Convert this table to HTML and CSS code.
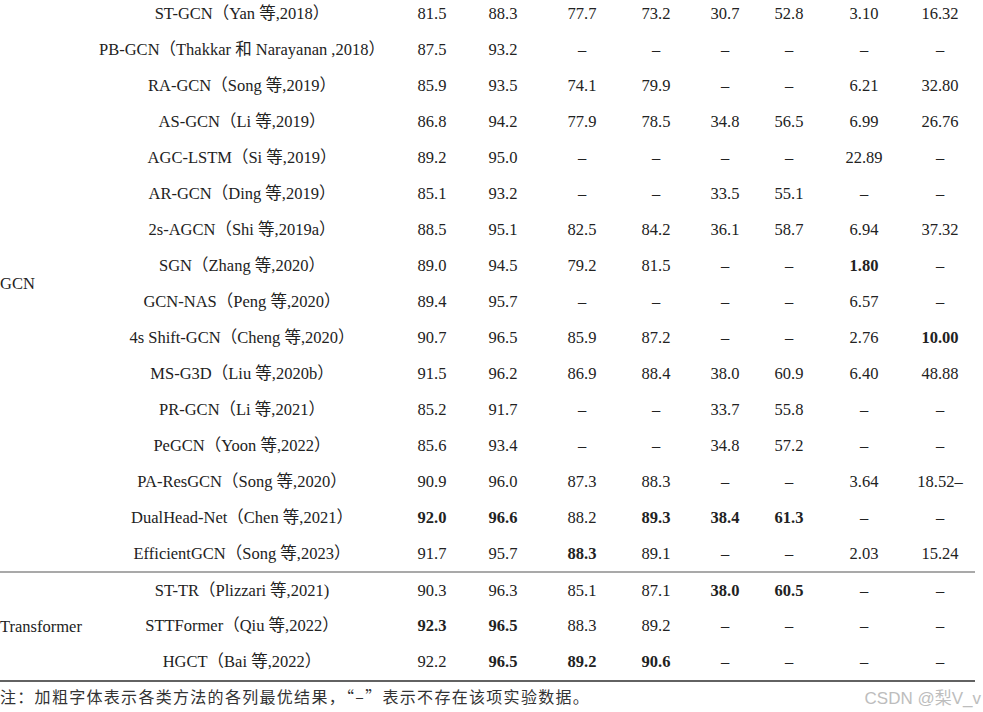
FILE: index.html
```html
<!DOCTYPE html>
<html lang="zh">
<head>
<meta charset="utf-8">
<title>Table</title>
<link rel="stylesheet" href="styles.css">
</head>
<body>
<div class="table">
  <div class="section gcn">
    <div class="group g16">GCN</div>
    <div class="m">ST-GCN（Yan 等,2018）</div><div class="n">81.5</div><div class="n">88.3</div><div class="n">77.7</div><div class="n">73.2</div><div class="n">30.7</div><div class="n">52.8</div><div class="n">3.10</div><div class="n">16.32</div>
    <div class="m">PB-GCN（Thakkar 和 Narayanan ,2018）</div><div class="n">87.5</div><div class="n">93.2</div><div class="n">–</div><div class="n">–</div><div class="n">–</div><div class="n">–</div><div class="n">–</div><div class="n">–</div>
    <div class="m">RA-GCN（Song 等,2019）</div><div class="n">85.9</div><div class="n">93.5</div><div class="n">74.1</div><div class="n">79.9</div><div class="n">–</div><div class="n">–</div><div class="n">6.21</div><div class="n">32.80</div>
    <div class="m">AS-GCN（Li 等,2019）</div><div class="n">86.8</div><div class="n">94.2</div><div class="n">77.9</div><div class="n">78.5</div><div class="n">34.8</div><div class="n">56.5</div><div class="n">6.99</div><div class="n">26.76</div>
    <div class="m">AGC-LSTM（Si 等,2019）</div><div class="n">89.2</div><div class="n">95.0</div><div class="n">–</div><div class="n">–</div><div class="n">–</div><div class="n">–</div><div class="n">22.89</div><div class="n">–</div>
    <div class="m">AR-GCN（Ding 等,2019）</div><div class="n">85.1</div><div class="n">93.2</div><div class="n">–</div><div class="n">–</div><div class="n">33.5</div><div class="n">55.1</div><div class="n">–</div><div class="n">–</div>
    <div class="m">2s-AGCN（Shi 等,2019a）</div><div class="n">88.5</div><div class="n">95.1</div><div class="n">82.5</div><div class="n">84.2</div><div class="n">36.1</div><div class="n">58.7</div><div class="n">6.94</div><div class="n">37.32</div>
    <div class="m">SGN（Zhang 等,2020）</div><div class="n">89.0</div><div class="n">94.5</div><div class="n">79.2</div><div class="n">81.5</div><div class="n">–</div><div class="n">–</div><div class="n b">1.80</div><div class="n">–</div>
    <div class="m">GCN-NAS（Peng 等,2020）</div><div class="n">89.4</div><div class="n">95.7</div><div class="n">–</div><div class="n">–</div><div class="n">–</div><div class="n">–</div><div class="n">6.57</div><div class="n">–</div>
    <div class="m">4s Shift-GCN（Cheng 等,2020）</div><div class="n">90.7</div><div class="n">96.5</div><div class="n">85.9</div><div class="n">87.2</div><div class="n">–</div><div class="n">–</div><div class="n">2.76</div><div class="n b">10.00</div>
    <div class="m">MS-G3D（Liu 等,2020b）</div><div class="n">91.5</div><div class="n">96.2</div><div class="n">86.9</div><div class="n">88.4</div><div class="n">38.0</div><div class="n">60.9</div><div class="n">6.40</div><div class="n">48.88</div>
    <div class="m">PR-GCN（Li 等,2021）</div><div class="n">85.2</div><div class="n">91.7</div><div class="n">–</div><div class="n">–</div><div class="n">33.7</div><div class="n">55.8</div><div class="n">–</div><div class="n">–</div>
    <div class="m">PeGCN（Yoon 等,2022）</div><div class="n">85.6</div><div class="n">93.4</div><div class="n">–</div><div class="n">–</div><div class="n">34.8</div><div class="n">57.2</div><div class="n">–</div><div class="n">–</div>
    <div class="m">PA-ResGCN（Song 等,2020）</div><div class="n">90.9</div><div class="n">96.0</div><div class="n">87.3</div><div class="n">88.3</div><div class="n">–</div><div class="n">–</div><div class="n">3.64</div><div class="n">18.52–</div>
    <div class="m">DualHead-Net（Chen 等,2021）</div><div class="n b">92.0</div><div class="n b">96.6</div><div class="n">88.2</div><div class="n b">89.3</div><div class="n b">38.4</div><div class="n b">61.3</div><div class="n">–</div><div class="n">–</div>
    <div class="m">EfficientGCN（Song 等,2023）</div><div class="n">91.7</div><div class="n">95.7</div><div class="n b">88.3</div><div class="n">89.1</div><div class="n">–</div><div class="n">–</div><div class="n">2.03</div><div class="n">15.24</div>
  </div>
  <div class="section trans">
    <div class="group g3">Transformer</div>
    <div class="m">ST-TR（Plizzari 等,2021)</div><div class="n">90.3</div><div class="n">96.3</div><div class="n">85.1</div><div class="n">87.1</div><div class="n b">38.0</div><div class="n b">60.5</div><div class="n">–</div><div class="n">–</div>
    <div class="m">STTFormer（Qiu 等,2022）</div><div class="n b">92.3</div><div class="n b">96.5</div><div class="n">88.3</div><div class="n">89.2</div><div class="n">–</div><div class="n">–</div><div class="n">–</div><div class="n">–</div>
    <div class="m">HGCT（Bai 等,2022）</div><div class="n">92.2</div><div class="n b">96.5</div><div class="n b">89.2</div><div class="n b">90.6</div><div class="n">–</div><div class="n">–</div><div class="n">–</div><div class="n">–</div>
  </div>
  <div class="note">
    <span class="note-text">注：加粗字体表示各类方法的各列最优结果，“–”表示不存在该项实验数据。</span>
    <span class="mark">CSDN @梨V_v</span>
  </div>
</div>
</body>
</html>
```
FILE: styles.css
```css
html, body {
  margin: 0;
  padding: 0;
  background: #fff;
  overflow: hidden;
}
body {
  width: 983px;
  height: 712px;
  font-family: "Liberation Serif", "Noto Sans CJK SC", serif;
  font-size: 16.5px;
  color: #222;
}
.table {
  width: 975px;
  margin-top: -4px;
}
.section {
  display: grid;
  grid-template-columns: 100px 284px 96px 46px 112px 36px 102px 26px 124px 28px;
  grid-auto-rows: 36px;
}
.trans {
  margin-top: -1px;
  border-top: 2px solid #a9a9a9;
  border-bottom: 2px solid #626262;
  grid-template-rows: 35px 36px 36px;
}
.group {
  grid-column: 1;
  display: flex;
  align-items: center;
  justify-content: flex-start;
  white-space: nowrap;
  line-height: 20px;
}
.g16 { grid-row: 1 / span 16; }
.g3 { grid-row: 1 / span 3; }
.m, .n {
  display: flex;
  align-items: center;
  justify-content: center;
  white-space: nowrap;
  line-height: 20px;
}
.b { font-weight: bold; }
.note {
  display: flex;
  align-items: center;
  height: 28px;
  width: 983px;
  overflow: hidden;
}
.note-text {
  font-family: "Noto Sans CJK SC", sans-serif;
  font-size: 16px;
  letter-spacing: 1.3px;
  color: #333;
}
.mark {
  margin-left: auto;
  margin-right: 2px;
  font-family: "Liberation Sans", "Noto Sans CJK SC", sans-serif;
  font-size: 17px;
  color: #bdbdbd;
}
```
